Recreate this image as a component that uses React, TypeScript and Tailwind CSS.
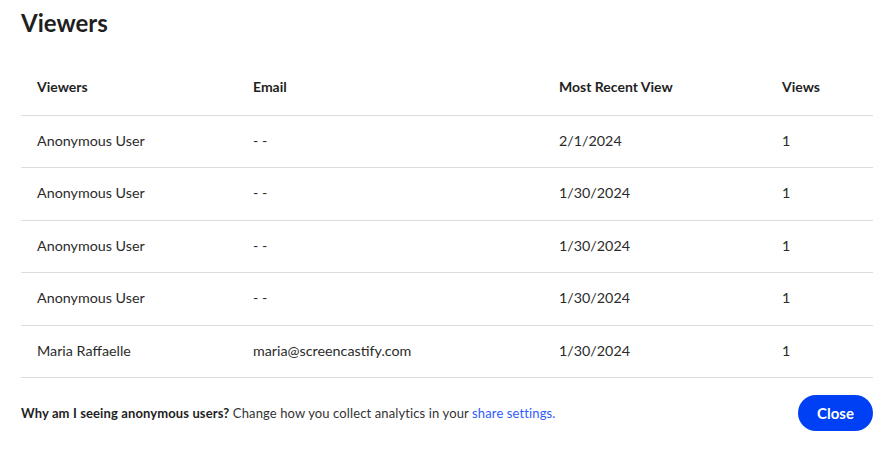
const rows = [
  { name: 'Anonymous User', email: '- -', date: '2/1/2024', views: 1 },
  { name: 'Anonymous User', email: '- -', date: '1/30/2024', views: 1 },
  { name: 'Anonymous User', email: '- -', date: '1/30/2024', views: 1 },
  { name: 'Anonymous User', email: '- -', date: '1/30/2024', views: 1 },
  { name: 'Maria Raffaelle', email: 'maria@screencastify.com', date: '1/30/2024', views: 1 },
];

export default function App() {
  return (
    <div className="w-[885px] h-[450px] bg-white px-[21px] pt-[8px] text-[#2b2b2b] font-['Lato','Noto_Sans',sans-serif]">
      <h1 className="text-[24px] font-bold leading-[30px] text-[#1f1f1f]">Viewers</h1>

      <table className="mt-[35px] w-[852px] table-fixed border-collapse text-[14.3px]">
        <colgroup>
          <col className="w-[216px]" />
          <col className="w-[306px]" />
          <col className="w-[223px]" />
          <col className="w-[107px]" />
        </colgroup>
        <thead>
          <tr className="h-[42px] border-b border-[#dcdcdc] text-left text-[14px]">
            <th className="pl-4 pb-[14px] align-middle font-bold text-[#1f1f1f]">Viewers</th>
            <th className="pl-4 pb-[14px] align-middle font-bold text-[#1f1f1f]">Email</th>
            <th className="pl-4 pb-[14px] align-middle font-bold text-[#1f1f1f]">Most Recent View</th>
            <th className="pl-4 pb-[14px] align-middle font-bold text-[#1f1f1f]">Views</th>
          </tr>
        </thead>
        <tbody>
          {rows.map((r, i) => (
            <tr key={i} className="h-[52.6px] border-b border-[#dcdcdc]">
              <td className="pl-4 pb-[2px]">{r.name}</td>
              <td className="pl-4 pb-[2px]">{r.email}</td>
              <td className="pl-4 pb-[2px]">{r.date}</td>
              <td className="pl-4 pb-[2px]">{r.views}</td>
            </tr>
          ))}
        </tbody>
      </table>

      <div className="mt-[17px] flex items-center justify-between w-[852px]">
        <p className="text-[13px] tracking-[0.12px] text-[#333]">
          <span className="font-bold text-[#1f1f1f]">Why am I seeing anonymous users?</span> Change how you collect analytics in your{' '}
          <a href="#" className="text-[#2e5bff]">share settings.</a>
        </p>
        <button className="h-[36px] w-[75px] rounded-full bg-[#0040f5] text-[15px] font-bold text-white">Close</button>
      </div>
    </div>
  );
}
